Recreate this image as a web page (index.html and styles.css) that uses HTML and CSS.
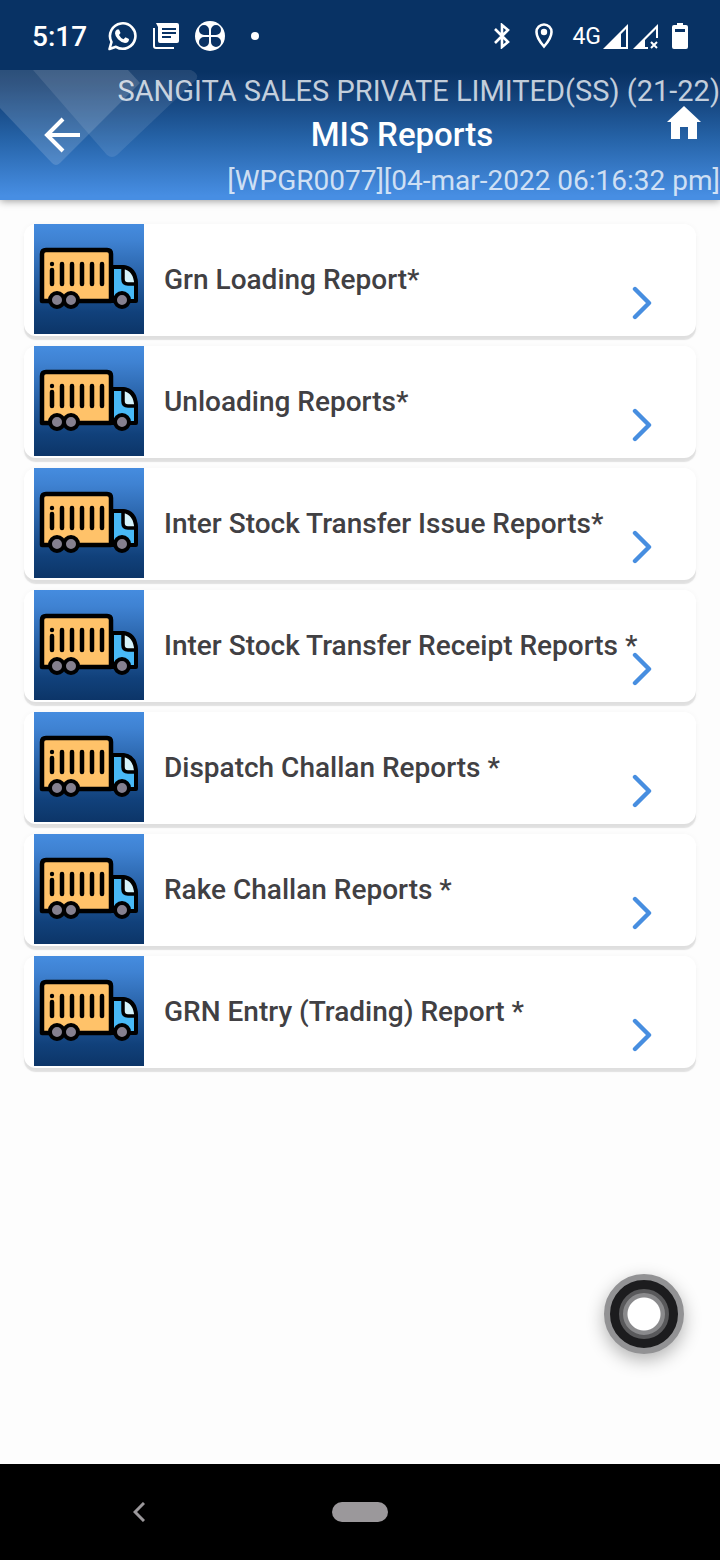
FILE: index.html
```html
<!DOCTYPE html>
<html lang="en">
<head>
<meta charset="utf-8">
<meta name="viewport" content="width=device-width, initial-scale=1">
<title>MIS Reports</title>
<link rel="stylesheet" href="styles.css">
</head>
<body>
<svg class="sprites" aria-hidden="true">
  <symbol id="truck" viewBox="0 0 110 110">
    <path d="M8 77V30q0-4 4-4h61q4 0 4 4v47z" fill="#ffc269" stroke="#000" stroke-width="4.500" stroke-linejoin="round"/>
    <path d="M78 43h11q12 1 13 16v18H78z" fill="#48b9f6" stroke="#000" stroke-width="4" stroke-linejoin="round"/>
    <path d="M89 43q12 2 13 17h-8q-5 0-5-5z" fill="#d5f3fb" stroke="#000" stroke-width="3.500"/>
    <path d="M18 46v14M28 40v20M38 40v20M48 40v20M58 40v20M68 40v20" stroke="#000" stroke-width="4.500" stroke-linecap="round"/>
    <circle cx="18" cy="40" r="2.200"/>
    <g fill="#85808f" stroke="#000" stroke-width="4"><circle cx="23" cy="76" r="7"/><circle cx="37" cy="76" r="7"/><circle cx="88" cy="76" r="7"/></g>
  </symbol>
  <symbol id="chevron" viewBox="0 0 20 34">
    <path d="M3 3l14 14L3 31" fill="none" stroke="currentColor" stroke-width="4.400" stroke-linecap="round" stroke-linejoin="round"/>
  </symbol>
</svg>
<div class="screen">
  <div class="top">
    <div class="status">
      <span class="clock">5:17</span>
      <svg class="s-icon" viewBox="0 0 30 30"><path d="M2.500 28L4.500 21A12.700 12.700 0 1 1 9 25.800z" fill="none" stroke="#fff" stroke-width="2.600" stroke-linejoin="round"/><path d="M10 8.500h2l1.500 3.500-1.500 2q1.500 3 4.500 4.300l2-2 3.500 1.700q0 4-4 4-4-.5-7-3.700-3-3.300-3-6 0-2.500 2-3.800z" fill="#fff"/></svg>
      <svg class="s-icon" viewBox="0 0 30 30"><path d="M3 7v18q0 2 2 2h18" fill="none" stroke="#fff" stroke-width="2"/><path fill="#fff" fill-rule="evenodd" d="M5 2h21q2 0 2 2v16q0 2-2 2H9q-2 0-2-2V6zM11 7v2h14V7zm0 4v2h14v-2zm0 4v2h9v-2z"/></svg>
      <svg class="s-icon" viewBox="0 0 30 30"><circle cx="15" cy="15" r="15" fill="#fff"/><g fill="#0a3264"><path d="M14 14V9a5 5 0 1 0-5 5zM16 14V9a5 5 0 1 1 5 5zM14 16v5a5 5 0 1 1-5-5zM16 16v5a5 5 0 1 0 5-5z"/></g></svg>
      <span class="more"></span>
      <span class="spacer"></span>
      <svg class="bluetooth" viewBox="0 0 18 26"><path d="M2 6l13 13-6 5V2l6 5L2 20" fill="none" stroke="#fff" stroke-width="2.600"/></svg>
      <svg class="pin" viewBox="0 0 18 26"><path d="M9 23.500Q1.500 15 1.500 9a7.500 7.500 0 0 1 15 0q0 6-7.500 14.500z" fill="none" stroke="#fff" stroke-width="2.600"/><circle cx="9" cy="9" r="3.200" fill="#fff"/></svg>
      <span class="network">4G</span>
      <svg class="signal" viewBox="0 0 25 25"><path d="M0 25L25 0v25zM18 10v13h5V5z" fill="#fff" fill-rule="evenodd"/></svg>
      <svg class="signal" viewBox="0 0 25 25"><path d="M0 25L25 0v14h-2V5L12 16v7h3v2z" fill="#fff"/><path d="M18 18l6 6M24 18l-6 6" stroke="#fff" stroke-width="2"/></svg>
      <svg class="battery" viewBox="0 0 16 26"><path d="M5 0h6v2h3q2 0 2 2v20q0 2-2 2H2q-2 0-2-2V4q0-2 2-2h3zM3 6v3h10V6z" fill="#fff" fill-rule="evenodd"/></svg>
    </div>
    <header class="header">
      <svg class="shapes" viewBox="0 0 200 130" aria-hidden="true"><path d="M0 0h128l12 13-80 80q-4 4-8 0L0 38z" fill="#fff" fill-opacity=".15"/><path d="M33 0h158q10 5 4 11l-78 74q-5 4-10 0z" fill="#fff" fill-opacity=".1"/></svg>
      <p class="company">SANGITA SALES PRIVATE LIMITED(SS) (21-22)</p>
      <button class="back" aria-label="Back"><svg viewBox="0 0 36 36"><path d="M36 18H3M19 2L3 18l16 16" fill="none" stroke="#fff" stroke-width="4"/></svg></button>
      <h1 class="title">MIS Reports</h1>
      <button class="home" aria-label="Home"><svg viewBox="0 0 34 34"><path d="M17 0l17 16h-4v17h-9V21h-8v12H4V16H0z" fill="#fff"/></svg></button>
      <p class="stamp">[WPGR0077][04-mar-2022 06:16:32 pm]</p>
    </header>
  </div>
  <main class="list">
    <a class="card" href="#"><svg class="thumb"><use href="#truck"/></svg><span class="name">Grn Loading Report*</span><svg class="arrow"><use href="#chevron"/></svg></a>
    <a class="card" href="#"><svg class="thumb"><use href="#truck"/></svg><span class="name">Unloading Reports*</span><svg class="arrow"><use href="#chevron"/></svg></a>
    <a class="card" href="#"><svg class="thumb"><use href="#truck"/></svg><span class="name">Inter Stock Transfer Issue Reports*</span><svg class="arrow"><use href="#chevron"/></svg></a>
    <a class="card" href="#"><svg class="thumb"><use href="#truck"/></svg><span class="name">Inter Stock Transfer Receipt Reports *</span><svg class="arrow"><use href="#chevron"/></svg></a>
    <a class="card" href="#"><svg class="thumb"><use href="#truck"/></svg><span class="name">Dispatch Challan Reports *</span><svg class="arrow"><use href="#chevron"/></svg></a>
    <a class="card" href="#"><svg class="thumb"><use href="#truck"/></svg><span class="name">Rake Challan Reports *</span><svg class="arrow"><use href="#chevron"/></svg></a>
    <a class="card" href="#"><svg class="thumb"><use href="#truck"/></svg><span class="name">GRN Entry (Trading) Report *</span><svg class="arrow"><use href="#chevron"/></svg></a>
  </main>
  <nav class="navbar">
    <button class="nav-back" aria-label="System back"><svg viewBox="0 0 12 20"><path d="M11 1l-9 9 9 9" fill="none" stroke="#9b989b" stroke-width="3"/></svg></button>
    <button class="nav-home" aria-label="System home"></button>
  </nav>
  <button class="assist" aria-label="Assistive touch"><span class="assist-dot"></span></button>
</div>
</body>
</html>
```

FILE: styles.css
```css
* { box-sizing: border-box; }
body {
  margin: 0;
  font-family: Roboto, "Liberation Sans", sans-serif;
  background: #fdfdfd;
}
p, h1 { margin: 0; }
button { padding: 0; border: 0; background: none; }
svg { display: block; }
.sprites { position: absolute; width: 0; height: 0; }
.screen {
  position: relative;
  display: flex;
  flex-direction: column;
  min-height: 100vh;
}
.top {
  background: linear-gradient(#083264 0, #083264 36%, #0f3a6f 43%, #2664a9 70%, #478ee3 98%);
  box-shadow: 0 1px 8px rgba(0, 0, 0, .4);
  color: #fff;
}
.status {
  display: flex;
  align-items: center;
  height: 70px;
  padding: 2px 32px 0;
}
.clock { margin-right: 20px; font-size: 28px; font-weight: 500; }
.s-icon { width: 30px; height: 30px; margin-right: 14px; }
.more { width: 8px; height: 8px; margin-left: 12px; border-radius: 50%; background: #fff; }
.spacer { flex: 1; }
.bluetooth { width: 18px; height: 26px; margin-right: 24px; }
.pin { width: 18px; height: 26px; margin-right: 19px; }
.network { margin-right: 2px; font-size: 23px; }
.signal { width: 25px; height: 25px; margin-right: 5px; }
.battery { width: 16px; height: 26px; margin-left: 9px; }
.header {
  position: relative;
  display: grid;
  grid-template-columns: 124px 1fr 40px;
  grid-template-rows: 40px 50px 40px;
}
.shapes { position: absolute; left: 0; top: 0; width: 200px; height: 130px; }
.company, .stamp {
  position: relative;
  grid-column: 1 / -1;
  line-height: 42px;
  text-align: right;
  white-space: nowrap;
  color: rgba(255, 255, 255, .75);
}
.company { grid-row: 1; font-size: 29px; }
.stamp { grid-row: 3; font-size: 28px; }
.back {
  position: relative;
  grid-area: 2 / 1;
  justify-self: center;
  align-self: center;
}
.back svg { width: 36px; height: 36px; }
.title {
  grid-area: 2 / 2;
  font-size: 33px;
  line-height: 50px;
  font-weight: 500;
  text-align: center;
}
.home {
  position: relative;
  grid-area: 1 / 3 / 3 / 4;
  align-self: end;
  justify-self: end;
  margin: 0 19px 20px 0;
}
.home svg { width: 34px; height: 34px; }
.list {
  flex: 1;
  display: flex;
  flex-direction: column;
  gap: 10px;
  padding: 24px;
}
.card {
  display: flex;
  align-items: flex-start;
  height: 112px;
  padding: 0 44px 0 10px;
  border-radius: 12px;
  background: #fff;
  box-shadow: 0 4px 1px rgba(0, 0, 0, .1), 0 1px 6px rgba(0, 0, 0, .04);
  color: #414043;
  text-decoration: none;
}
.thumb {
  flex: none;
  width: 110px;
  height: 110px;
  background: linear-gradient(#458cdf 0, #3f82d2 15%, #11417b 80%, #0c3568 100%);
}
.name {
  flex: 1;
  min-width: 0;
  margin-left: 20px;
  font-size: 28px;
  line-height: 112px;
  font-weight: 500;
  white-space: nowrap;
}
.arrow {
  flex: none;
  align-self: flex-end;
  width: 20px;
  height: 34px;
  margin-bottom: 16px;
  color: #478ee0;
}
.navbar {
  display: grid;
  grid-template-columns: 1fr 56px 1fr;
  align-items: center;
  height: 96px;
  background: #000;
}
.nav-back { justify-self: center; margin-left: -54px; }
.nav-back svg { width: 12px; height: 20px; }
.nav-home { height: 20px; border-radius: 10px; background: #9b989b; }
.assist {
  position: absolute;
  right: 36px;
  bottom: 206px;
  display: grid;
  place-items: center;
  width: 80px;
  height: 80px;
  border: 6px solid #929294;
  border-radius: 50%;
  background: #1c1c1e;
  box-shadow: 0 6px 18px rgba(0, 0, 0, .3);
}
.assist-dot {
  width: 50px;
  height: 50px;
  border: 4px solid #59595b;
  border-radius: 50%;
  background: radial-gradient(circle, #fff 16px, #8a8a8c 17px);
}
```
